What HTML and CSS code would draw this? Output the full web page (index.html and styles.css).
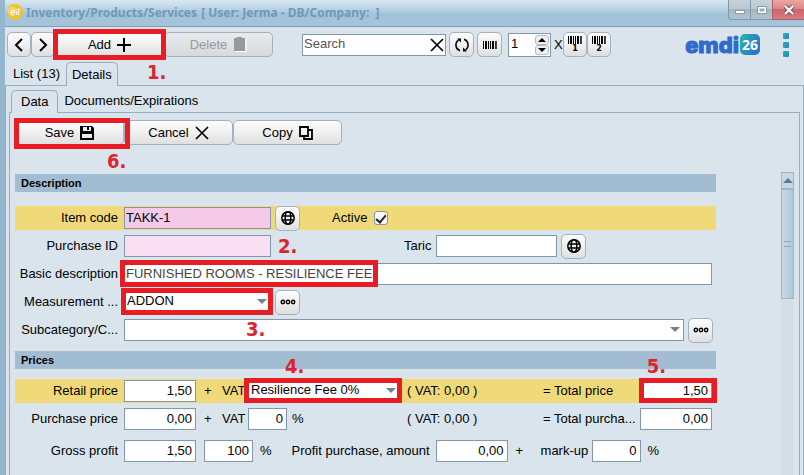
FILE: index.html
```html
<!DOCTYPE html>
<html lang="en">
<head>
<meta charset="utf-8">
<title>Inventory/Products/Services</title>
<link rel="stylesheet" href="styles.css">
</head>
<body>
<svg class="defs" aria-hidden="true">
  <symbol id="globe" viewBox="0 0 16 16"><g fill="none" stroke="#000" stroke-width="1.5"><circle cx="8" cy="8" r="6.2"/><ellipse cx="8" cy="8" rx="2.8" ry="6.2"/><path d="M2 6h12M2 10h12" stroke-width="1.3"/></g></symbol>
  <symbol id="dots" viewBox="0 0 16 6"><g fill="none" stroke="#000" stroke-width="1.4"><circle cx="2.9" cy="3" r="1.7"/><circle cx="8" cy="3" r="1.7"/><circle cx="13.1" cy="3" r="1.7"/></g></symbol>
  <symbol id="bars" viewBox="0 0 14 8"><path d="M0 0h1v8H0zM2 0h2v8H2zM5 0h1v8H5zM7 0h1v8H7zM9 0h2v8H9zM12 0h.8v8H12zM13.3 0h.7v8h-.7z"/></symbol>
</svg>
<div class="window">
  <header class="titlebar">
    <svg class="app-icon" viewBox="0 0 16 16"><circle cx="8" cy="8" r="8" fill="#f4c22f"/><circle cx="5" cy="7" r="4.500" fill="#fbe08a" opacity=".6"/><g fill="none" stroke="#fff" stroke-width="1.1"><path d="M4 8.500h3.500c0-3-3.500-3-3.500 0s2 3 3.300 1.800M9.500 11V7.500M9.500 6V5M11.500 11V6q0-1.500 1.500-1.300M10.500 7.500h2"/></g></svg>
    <h1 class="title">Inventory/Products/Services <span class="title-user">[ User: Jerma - DB/Company:&nbsp; ]</span></h1>
    <div class="win-buttons">
      <button class="win-btn" aria-label="Minimize"><svg width="12" height="12" viewBox="0 0 12 12"><rect x="1.500" y="6.500" width="9" height="3" fill="#fff" stroke="#8b99a4"/></svg></button>
      <button class="win-btn" aria-label="Maximize"><svg width="12" height="12" viewBox="0 0 12 12"><rect x="1.500" y="2.500" width="9" height="7" fill="#fff" stroke="#8b99a4"/><rect x="4" y="5" width="4" height="2" fill="#b4c0ca" stroke="#8b99a4" stroke-width=".8"/></svg></button>
      <button class="win-btn win-close" aria-label="Close"><svg width="12" height="12" viewBox="0 0 12 12"><path d="M2 2l8 8M10 2l-8 8" stroke="#7d4a55" stroke-width="4"/><path d="M2 2l8 8M10 2l-8 8" stroke="#fff" stroke-width="2.400"/></svg></button>
    </div>
  </header>

  <div class="toolbar">
    <div class="group">
      <button class="btn icon-btn" aria-label="Previous"><svg width="12" height="16" viewBox="0 0 12 16"><path d="M9 2L3 8l6 6" fill="none" stroke="#000" stroke-width="2"/></svg></button>
      <button class="btn icon-btn" aria-label="Next"><svg width="12" height="16" viewBox="0 0 12 16"><path d="M3 2l6 6-6 6" fill="none" stroke="#000" stroke-width="2"/></svg></button>
      <div class="marked">
        <button class="btn wide-btn">Add <svg width="14" height="14" viewBox="0 0 14 14"><path d="M7 0v14M0 7h14" stroke="#000" stroke-width="2"/></svg></button>
        <i class="mark mark-add"></i><b class="step step-1">1.</b>
      </div>
      <button class="btn wide-btn delete" disabled>Delete <svg width="14" height="15" viewBox="0 0 14 15"><path d="M1 1h3V0h5v1h3v2H1z" fill="#999"/><path d="M1 3h11v11H1z" fill="#999"/><path d="M13 2v12.500H2" fill="none" stroke="#fff"/></svg></button>
    </div>
    <div class="search"><input class="field search-input" aria-label="Search" placeholder="Search"><button class="clear" aria-label="Clear"><svg width="14" height="14" viewBox="0 0 14 14"><path d="M1 1l12 12M13 1L1 13" stroke="#000" stroke-width="1.700"/></svg></button></div>
    <button class="btn icon-btn" aria-label="Refresh"><svg width="16" height="16" viewBox="0 0 16 16"><g fill="none" stroke="#000" stroke-width="1.500"><path d="M6 13.800A6 6 0 0 1 4.500 3.200M10 2.200A6 6 0 0 1 11.500 12.800"/></g><path d="M3 1.500h4v4zM13 14.500H9v-4z"/></svg></button>
    <button class="btn icon-btn" aria-label="Barcode"><svg width="14" height="8"><use href="#bars"/></svg></button>
    <div class="spinner"><input class="spin-input" aria-label="Copies" value="1"><div class="spin-buttons"><button aria-label="Increase"><svg width="8" height="4" viewBox="0 0 8 4"><path d="M4 0l4 4H0z"/></svg></button><button aria-label="Decrease"><svg width="8" height="4" viewBox="0 0 8 4"><path d="M0 0h8L4 4z"/></svg></button></div></div>
    <div class="group prints"><span class="times">X</span>
      <button class="btn icon-btn print"><svg width="14" height="8"><use href="#bars"/></svg>1</button>
      <button class="btn icon-btn print"><svg width="14" height="8"><use href="#bars"/></svg>2</button>
    </div>
    <div class="brand"><span class="brand-name">emdi</span><span class="brand-num">26</span></div>
    <button class="more" aria-label="More"><i></i><i></i><i></i></button>
  </div>

  <nav class="tabs outer-tabs"><a class="tab" href="#list">List (13)</a><a class="tab active" href="#details">Details</a></nav>
  <div class="panel outer-panel">
    <nav class="tabs inner-tabs"><a class="tab active" href="#data">Data</a><a class="tab" href="#documents">Documents/Expirations</a></nav>
    <main class="panel inner-panel">
      <div class="group actions">
        <div class="marked">
          <button class="btn wide-btn">Save <svg width="14" height="14" viewBox="0 0 14 14"><path fill-rule="evenodd" d="M0 0h12l2 2v12H0zM3 1v4h8V1H9v3H7V1zM2 8v4h10V8z"/></svg></button>
          <i class="mark mark-save"></i><b class="step step-6">6.</b>
        </div>
        <button class="btn wide-btn">Cancel <svg width="14" height="14" viewBox="0 0 14 14"><path d="M1 1l12 12M13 1L1 13" stroke="#000" stroke-width="1.700"/></svg></button>
        <button class="btn wide-btn">Copy <svg width="14" height="14" viewBox="0 0 14 14"><g fill="none" stroke="#000" stroke-width="1.800"><path d="M1 1h8v9H1zM9 4h4v9H5v-3"/></g></svg></button>
      </div>
      <div class="content">
        <form class="form">
          <h2 class="band">Description</h2>
          <div class="rows">
            <div class="row gold">
              <label class="label" for="code">Item code</label>
              <div class="cell medium"><input class="field pink" id="code" value="TAKK-1"></div>
              <button type="button" class="btn icon-btn" aria-label="Translate"><svg width="16" height="16"><use href="#globe"/></svg></button>
              <label class="active-label" for="active">Active</label><input class="check" type="checkbox" id="active" checked>
            </div>
            <div class="row">
              <label class="label" for="pid">Purchase ID</label>
              <div class="cell medium"><input class="field pale" id="pid"><b class="step step-2">2.</b></div>
              <label class="taric-label" for="taric">Taric</label>
              <div class="cell taric"><input class="field" id="taric"></div>
              <button type="button" class="btn icon-btn" aria-label="Taric lookup"><svg width="16" height="16"><use href="#globe"/></svg></button>
            </div>
            <div class="row">
              <label class="label" for="desc">Basic description</label>
              <div class="cell grow"><input class="field soft" id="desc" value="FURNISHED ROOMS - RESILIENCE FEE"><i class="mark mark-desc"></i></div>
            </div>
            <div class="row">
              <label class="label" for="unit">Measurement ...</label>
              <div class="cell medium select"><select class="field" id="unit"><option>ADDON</option></select><i class="mark mark-unit"></i></div>
              <button type="button" class="btn icon-btn" aria-label="Units"><svg width="16" height="6"><use href="#dots"/></svg></button>
            </div>
            <div class="row">
              <label class="label" for="sub">Subcategory/C...</label>
              <div class="cell grow select"><select class="field" id="sub"><option></option></select><b class="step step-3">3.</b></div>
              <button type="button" class="btn icon-btn" aria-label="Subcategories"><svg width="16" height="6"><use href="#dots"/></svg></button>
            </div>
          </div>
          <h2 class="band">Prices<b class="step step-4">4.</b><b class="step step-5">5.</b></h2>
          <div class="rows prices">
            <div class="row gold">
              <label class="label" for="retail">Retail price</label>
              <div class="cell small"><input class="field num" id="retail" value="1,50"></div>
              <span class="plus">+</span><label class="vat" for="rvat">VAT</label>
              <div class="cell select vat-select"><select class="field" id="rvat"><option>Resilience Fee 0%</option></select><i class="mark mark-vat"></i></div>
              <span class="vat-sum">( VAT: 0,00 )</span>
              <label class="total-label" for="rtotal">= Total price</label>
              <div class="cell small"><input class="field num" id="rtotal" value="1,50"><i class="mark mark-total"></i></div>
            </div>
            <div class="row">
              <label class="label" for="purchase">Purchase price</label>
              <div class="cell small"><input class="field num" id="purchase" value="0,00"></div>
              <span class="plus">+</span><label class="vat" for="pvat">VAT</label>
              <div class="vat-select percent"><div class="cell tiny"><input class="field num" id="pvat" value="0"></div><span>%</span></div>
              <span class="vat-sum">( VAT: 0,00 )</span>
              <label class="total-label" for="ptotal">= Total purcha...</label>
              <div class="cell small"><input class="field num" id="ptotal" value="0,00"></div>
            </div>
            <div class="row gross">
              <label class="label" for="gross">Gross profit</label>
              <div class="cell small"><input class="field num" id="gross" value="1,50"></div>
              <div class="cell short first"><input class="field num" aria-label="Gross profit percent" value="100"></div>
              <span class="unit">%</span>
              <label class="profit-label" for="amount">Profit purchase, amount</label>
              <div class="cell small"><input class="field num" id="amount" value="0,00"></div>
              <span class="plus">+</span><label class="markup-label" for="markup">mark-up</label>
              <div class="cell short"><input class="field num" id="markup" value="0"></div>
              <span class="unit">%</span>
            </div>
          </div>
        </form>
        <div class="scrollbar"><div class="scroll-up"></div><div class="thumb"></div></div>
      </div>
    </main>
  </div>
</div>
</body>
</html>
```
FILE: styles.css
```css
* { box-sizing: border-box; }
body { margin: 0; font: 13px/16px "Liberation Sans", Arial, sans-serif; color: #000; background: #d9e4ec; }
button, input, select { font: inherit; color: inherit; margin: 0; padding: 0; }
svg { display: block; flex: none; }
.defs { position: absolute; width: 0; height: 0; }
.window { height: 100vh; display: flex; flex-direction: column; border-left: 5px solid #94b6cf; overflow: hidden; }

/* Title bar */
.titlebar { display: flex; align-items: flex-start; height: 27px; flex: none; margin-left: -5px; padding-left: 7px; border-bottom: 1px solid #7e9db8; background: linear-gradient(#d9e9f2, #b8d2e2 35%, #a1c3d9 55%, #a5c4d9); }
.app-icon { width: 16px; height: 16px; margin-top: 4px; }
.title { flex: 1; margin: 5px 0 0 3px; font: bold 12px/16px "Noto Sans", sans-serif; color: #6e99b9; white-space: nowrap; }
.title-user { margin-left: 1px; }
.win-buttons { display: flex; }
.win-btn { width: 22px; height: 20px; display: flex; align-items: center; justify-content: center; border: 1px solid #8199aa; border-width: 0 0 1px 1px; background: linear-gradient(#c7d2d9, #b8c7d1 50%, #a2b6c3 50%, #b3c4cf); }
.win-btn:first-child { border-radius: 0 0 0 4px; }
.win-close { width: 32px; border-color: #a9616c; background: linear-gradient(#e8a6a5, #db8585 50%, #ce646b 50%, #d57c80); }

/* Buttons */
.group { display: flex; }
.btn { height: 25px; display: flex; align-items: center; justify-content: center; gap: 6px; flex: none; border: 1px solid #a2b2be; border-radius: 5px; background: linear-gradient(#fcfcfc, #f1f1f1 45%, #dedfe0); }
.icon-btn { width: 25px; }
.wide-btn { width: 109px; }
.delete { color: #999; background: linear-gradient(#e7ebed, #d5dadc); border-color: #a9b0b5; }

/* Toolbar */
.toolbar { display: flex; align-items: center; height: 35px; flex: none; padding: 0 15px 0 2px; }
.toolbar .group .icon-btn { width: 24px; }
.search { display: flex; position: relative; width: 144px; margin: 0 3px 0 29px; }
.search + .btn { margin-right: 3px; }
.search-input::placeholder { color: #555; opacity: 1; }
.clear { position: absolute; right: 2px; top: 4px; border: 0; background: none; }
.spinner { display: flex; width: 43px; height: 24px; margin-left: 6px; padding: 1px; border: 1px solid #8297ab; background: #fff; }
.spin-input { flex: 1; min-width: 0; height: 18px; border: 0; padding-left: 1px; background: none; }
.spin-buttons { display: flex; flex-direction: column; width: 14px; }
.spin-buttons button { flex: 1; display: flex; align-items: center; justify-content: center; border: 1px solid #bbb; border-radius: 3px; background: #eee; }
.prints { align-items: center; margin-left: 3px; }
.times { width: 9px; }
.toolbar .print { flex-direction: column; gap: 1px; font: bold 8px/8px "DejaVu Sans", sans-serif; }
.brand { display: flex; align-items: center; margin-left: auto; }
.brand-name { font: 800 22px/22px Inter, sans-serif; color: #316acb; -webkit-text-stroke: 1px #316acb; }
.brand-num { width: 20px; height: 21px; margin-left: 1px; border-radius: 5px; font: bold 14px/21px "Open Sans", sans-serif; text-align: center; color: #fff; background: linear-gradient(120deg, #29b9a4, #2f72cf 80%); }
.more { display: grid; gap: 3px; margin-left: 23px; border: 0; background: none; }
.more i { width: 6px; height: 6px; border-radius: 1px; background: linear-gradient(120deg, #26b6b6, #2d7fc4); }

/* Tabs and panels */
.tabs { display: flex; height: 23px; flex: none; }
.tab { display: flex; align-items: center; padding: 0 6px; color: inherit; text-decoration: none; white-space: nowrap; }
.active.tab { height: 24px; z-index: 1; border: 1px solid #97aec1; border-bottom: 0; border-radius: 5px 5px 0 0; background: #d9e4ec; padding: 0 5px; }
.outer-tabs { padding-left: 2px; }
.inner-tabs { padding-left: 5px; margin-top: 4px; height: 22px; }
.inner-tabs .active { height: 23px; padding: 0 9px; }
.panel { display: flex; flex-direction: column; flex: 1; min-height: 0; border: 1px solid #97aec1; border-bottom: 0; }
.inner-panel { margin: 0 3px; }
.actions { padding: 7px 0 0 5px; }
.content { display: flex; flex: 1; min-height: 0; margin-top: 27px; padding: 0 5px; }

/* Form */
.form { flex: 1; margin-right: 65px; }
.band { position: relative; height: 18px; margin: 2px 0 14px; padding-left: 6px; font: bold 11px/18px "Liberation Sans", Arial, sans-serif; background: #a2bcd1; }
.rows { display: flex; flex-direction: column; gap: 4px; margin-bottom: 9px; }
.row { display: flex; align-items: center; height: 24px; padding-right: 4px; white-space: nowrap; }
.gold { background: #f0d978; }
.label { width: 109px; padding-right: 6px; text-align: right; flex: none; }
.cell { position: relative; flex: none; height: 22px; }
.field { display: block; width: 100%; height: 22px; padding: 0 3px 2px 1px; border: 1px solid #8297ab; border-radius: 0; outline: 0; background: #fff; }
.num { text-align: right; }
.pink { background: #f4cae8; }
.pale { background: #fadff2; }
.soft { color: #444; }
.medium { width: 147px; }
.medium + .btn, .taric + .btn, .grow + .btn { margin-left: 4px; }
.grow + .btn { margin-right: -1px; }
.grow { flex: 1; }
.small { width: 72px; }
.short { width: 49px; }
.tiny { width: 39px; }
.select select { appearance: none; padding-left: 2px; }
.select::after { content: ""; position: absolute; right: 4px; top: 8px; border: 5px solid transparent; border-top-color: #6f8291; border-bottom: 0; pointer-events: none; }
.active-label { margin-left: 32px; width: 42px; }
.check { appearance: none; width: 14px; height: 14px; border: 1px solid #8297ab; border-radius: 3px; background: #f7f7f7; display: grid; place-items: center; }
.check:checked::after { content: ""; width: 4px; height: 8px; border: solid #222; border-width: 0 2px 2px 0; transform: rotate(40deg); }
.taric-label { margin-left: 133px; width: 32px; }
.taric { width: 121px; }
.prices { margin-top: -4px; }
.plus { width: 26px; padding-left: 8px; }
.vat { width: 26px; }
.vat-select { width: 152px; }
.percent { display: flex; align-items: center; gap: 5px; }
.vat-sum { margin-left: 7px; width: 136px; }
.total-label { width: 97px; margin-right: auto; }
.gross { margin-top: 4px; }
.first { margin-left: 8px; }
.unit { margin-left: 7px; }
.profit-label { width: 164px; padding-right: 6px; text-align: right; }
.markup-label { margin-left: 7px; width: 51px; }

/* Scrollbar */
.scrollbar { width: 17px; background: #d2dfe6; }
.scroll-up { height: 17px; border: 1px solid #9db5c8; background: #c5d8e6; display: grid; place-items: center; }
.scroll-up::after { content: ""; border: 5px solid transparent; border-bottom-color: #617a90; border-top: 0; }
.thumb { height: 110px; border: 1px solid #9db5c8; background: linear-gradient(90deg, #c8dae7, #adc7da); display: grid; place-items: center; }
.thumb::after { content: ""; width: 7px; height: 4px; border: solid #8aa5ba; border-width: 1px 0; }

/* Tutorial marks */
.marked { position: relative; }
.mark { position: absolute; border: 5px solid #e81c24; pointer-events: none; z-index: 2; }
.mark-add { inset: -3px -2px -3px -2px; }
.mark-save { inset: -2px -6px -4px -1px; }
.mark-desc { inset: -3px auto -2px -4px; width: 258px; }
.mark-unit { inset: -3px -2px -2px -3px; }
.mark-vat { inset: -2px -2px -1px -4px; }
.mark-total { inset: -2px -5px -1px -1px; }
.step { position: absolute; z-index: 3; font: bold 20px/20px "DejaVu Sans Condensed", "DejaVu Sans", sans-serif; color: #dc2430; }
.step-1 { left: 92px; top: 30px; }
.step-2 { left: 154px; top: 1px; }
.step-3 { left: 122px; top: 0; }
.step-4 { left: 270px; top: 5px; }
.step-5 { right: 50px; top: 5px; }
.step-6 { left: 92px; top: 31px; }
```
